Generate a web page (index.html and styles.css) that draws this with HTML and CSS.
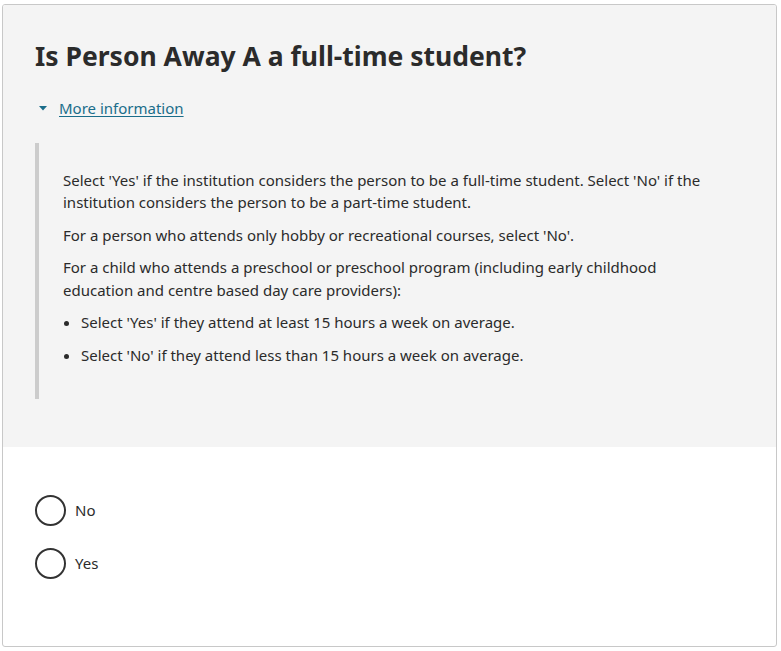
FILE: index.html
```html
<!DOCTYPE html>
<html lang="en">
<head>
<meta charset="utf-8">
<title>Full-time student</title>
<link rel="stylesheet" href="styles.css">
</head>
<body>
<div class="card">
  <section class="question">
    <h1 class="question-title">Is Person Away A a full-time student?</h1>
    <div class="details">
      <a class="details-toggle" href="#">
        <svg class="caret" width="8" height="5" viewBox="0 0 8 5" aria-hidden="true"><path d="M0 0H8L4 4.5Z" fill="currentColor"/></svg>
        <span class="details-label">More information</span>
      </a>
    </div>
    <blockquote class="details-panel">
      <p>Select 'Yes' if the institution considers the person to be a full-time student. Select 'No' if the institution considers the person to be a part-time student.</p>
      <p>For a person who attends only hobby or recreational courses, select 'No'.</p>
      <p>For a child who attends a preschool or preschool program (including early childhood education and centre based day care providers):</p>
      <ul>
        <li>Select 'Yes' if they attend at least 15 hours a week on average.</li>
        <li>Select 'No' if they attend less than 15 hours a week on average.</li>
      </ul>
    </blockquote>
  </section>
  <section class="answers">
    <label class="radio"><span class="radio-circle"></span><span class="radio-label">No</span></label>
    <label class="radio"><span class="radio-circle"></span><span class="radio-label">Yes</span></label>
  </section>
</div>
</body>
</html>
```
FILE: styles.css
```css
html, body {
  margin: 0;
  padding: 0;
  background: #ffffff;
}
body {
  padding: 4px 0 0 2px;
  font-family: "Noto Sans", "Open Sans", sans-serif;
  font-size: 15px;
  color: #2b2b2b;
}
.card {
  width: 775px;
  height: 643px;
  box-sizing: border-box;
  border: 1px solid #c8c8c8;
  border-radius: 3px;
  overflow: hidden;
  display: flex;
  flex-direction: column;
}
.question {
  background: #f4f4f4;
  height: 442px;
  box-sizing: border-box;
  padding: 34px 32px 0 32px;
}
.question-title {
  margin: 0;
  font-size: 26.5px;
  line-height: 34px;
  font-weight: 700;
  color: #2b2b2b;
}
.details {
  margin-top: 21px;
  line-height: 22.5px;
}
.details-toggle {
  display: inline-flex;
  align-items: center;
  color: #1a6d8a;
  text-decoration: none;
}
.caret {
  margin-left: 4px;
  margin-right: 12px;
  display: block;
}
.details-label {
  text-decoration: underline;
  text-underline-offset: 2px;
}
.details-panel {
  margin: 23px 0 0 0;
  border-left: 4px solid #cccccc;
  padding: 26px 30px 33px 24px;
  line-height: 22.5px;
}
.details-panel p {
  margin: 0 0 10px 0;
}
.details-panel ul {
  margin: 0;
  padding-left: 18px;
}
.details-panel li + li {
  margin-top: 10px;
}
.answers {
  flex: 1;
  padding: 48px 32px 0 32px;
  display: flex;
  flex-direction: column;
  gap: 21.5px;
}
.radio {
  display: flex;
  align-items: center;
  height: 31px;
}
.radio-circle {
  width: 31px;
  height: 31px;
  box-sizing: border-box;
  border: 2px solid #333333;
  border-radius: 50%;
  background: #ffffff;
  flex: none;
}
.radio-label {
  margin-left: 9px;
  line-height: 22.5px;
}
```
